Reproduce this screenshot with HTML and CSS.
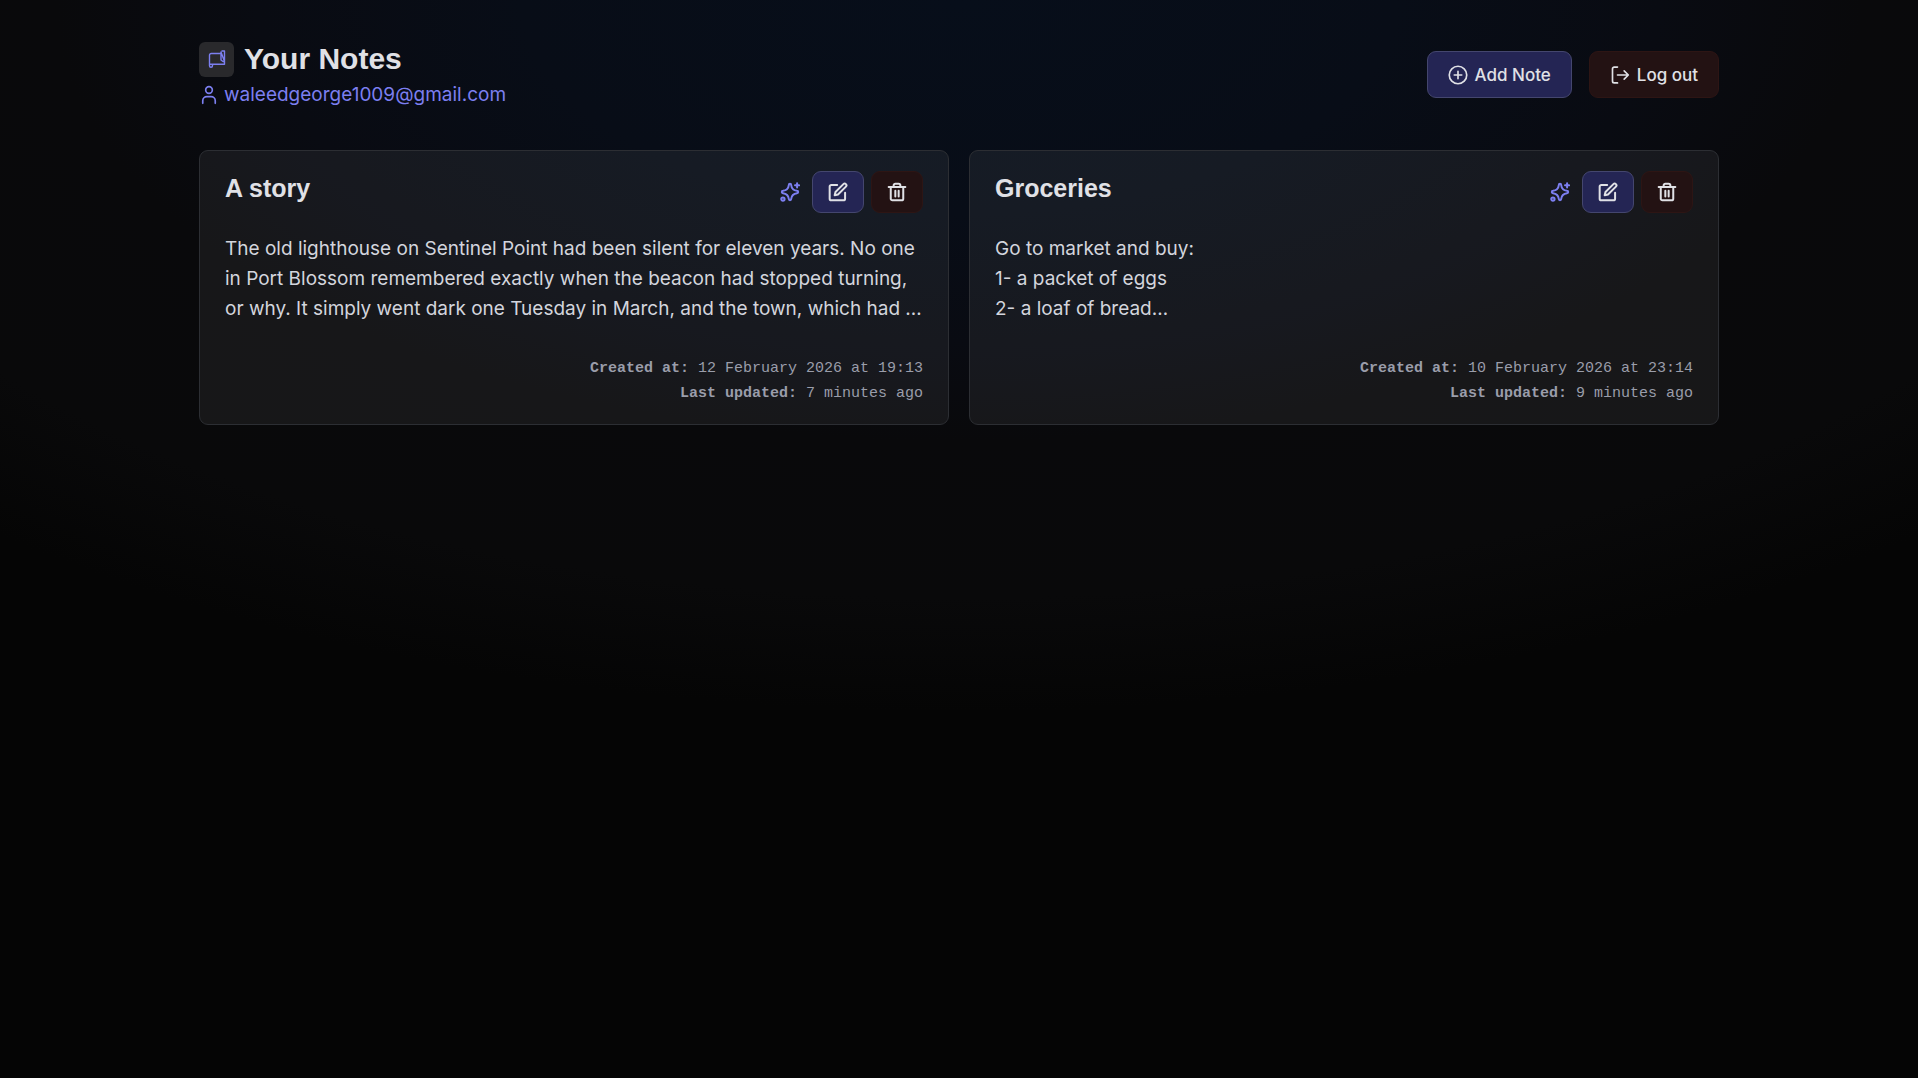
FILE: index.html
```html
<!DOCTYPE html>
<html lang="en">
<head>
  <meta charset="UTF-8">
  <title>Your Notes</title>
  <meta name="viewport" content="width=device-width, initial-scale=1.0">
  <link rel="stylesheet" href="styles.css">
</head>
<body>
  <!-- shared icons -->
  <svg class="sprite" aria-hidden="true">
    <symbol id="icon-sparkles" viewBox="0 0 24 24">
      <path d="M10.600 3.600a1.400 1.400 0 0 1 2.800 0c.5 4.600 2.400 6.500 7 7a1.400 1.400 0 0 1 0 2.800c-4.600.5-6.500 2.400-7 7a1.400 1.400 0 0 1-2.800 0c-.5-4.600-2.400-6.500-7-7a1.400 1.400 0 0 1 0-2.800c4.600-.5 6.500-2.400 7-7z"/>
      <path d="M20.500 1.500v5M23 4h-5"/>
      <circle cx="3.500" cy="20.500" r="2"/>
    </symbol>
    <symbol id="icon-edit" viewBox="0 0 24 24">
      <path d="M11 3.500H4a2 2 0 0 0-2 2v14.500a2 2 0 0 0 2 2h14.500a2 2 0 0 0 2-2v-7"/>
      <path d="M18.500 2.500a2.120 2.120 0 0 1 3 3L12 15l-4 1 1-4z"/>
    </symbol>
    <symbol id="icon-trash" viewBox="0 0 24 24">
      <path d="M2 6h20M8 6V4a2 2 0 0 1 2-2h4a2 2 0 0 1 2 2v2M19.500 6v14a2 2 0 0 1-2 2h-11a2 2 0 0 1-2-2V6M10 10.500v7M14 10.500v7"/>
    </symbol>
  </svg>

  <div class="page">
    <header class="header">
      <div>
        <h1 class="title">
          <span class="logo">
            <svg viewBox="0 0 20 20"><path d="M14 4.500H4.200a1.700 1.700 0 0 0-1.700 1.700V16.800a1.500 1.500 0 0 0 3 0V15.200H14.500M2.500 15.200H5.500M14.500 2H17.500V15.200H14.500M17.500 12.500H16L14 11V3Z"/></svg>
          </span>
          Your Notes
        </h1>
        <p class="email">
          <svg class="icon" viewBox="0 0 24 24"><circle cx="12" cy="6" r="4"/><path d="M4.500 22v-3a5 5 0 0 1 5-5h5a5 5 0 0 1 5 5v3"/></svg>
          waleedgeorge1009@gmail.com
        </p>
      </div>
      <div class="header-actions">
        <button class="btn btn-primary" type="button">
          <svg class="icon" viewBox="0 0 24 24"><circle cx="12" cy="12" r="10.500"/><path d="M12 7.500v9M7.500 12h9"/></svg>
          Add Note
        </button>
        <button class="btn btn-danger" type="button">
          <svg class="icon" viewBox="0 0 24 24"><path d="M9 2.500H5a2 2 0 0 0-2 2v15a2 2 0 0 0 2 2h4M9 12h13M17 7l5 5-5 5"/></svg>
          Log out
        </button>
      </div>
    </header>

    <main class="notes">
      <article class="note">
        <div class="note-head">
          <h2>A story</h2>
          <div class="note-actions">
            <button class="btn-ai" type="button" aria-label="Summarize"><svg class="icon"><use href="#icon-sparkles"/></svg></button>
            <button class="btn btn-small btn-primary" type="button" aria-label="Edit"><svg class="icon"><use href="#icon-edit"/></svg></button>
            <button class="btn btn-small btn-danger" type="button" aria-label="Delete"><svg class="icon"><use href="#icon-trash"/></svg></button>
          </div>
        </div>
        <p class="note-text">The old lighthouse on Sentinel Point had been silent for eleven years. No one
in Port Blossom remembered exactly when the beacon had stopped turning,
or why. It simply went dark one Tuesday in March, and the town, which had …</p>
        <div class="note-meta">
          <p><strong>Created at:</strong> 12 February 2026 at 19:13</p>
          <p><strong>Last updated:</strong> 7 minutes ago</p>
        </div>
      </article>

      <article class="note">
        <div class="note-head">
          <h2>Groceries</h2>
          <div class="note-actions">
            <button class="btn-ai" type="button" aria-label="Summarize"><svg class="icon"><use href="#icon-sparkles"/></svg></button>
            <button class="btn btn-small btn-primary" type="button" aria-label="Edit"><svg class="icon"><use href="#icon-edit"/></svg></button>
            <button class="btn btn-small btn-danger" type="button" aria-label="Delete"><svg class="icon"><use href="#icon-trash"/></svg></button>
          </div>
        </div>
        <p class="note-text">Go to market and buy:
1- a packet of eggs
2- a loaf of bread…</p>
        <div class="note-meta">
          <p><strong>Created at:</strong> 10 February 2026 at 23:14</p>
          <p><strong>Last updated:</strong> 9 minutes ago</p>
        </div>
      </article>
    </main>
  </div>
</body>
</html>
```

FILE: styles.css
```css
* {
  box-sizing: border-box;
  margin: 0;
  padding: 0;
}
body {
  min-height: 100vh;
  background: radial-gradient(ellipse 76% 66% at 50% 0, #070e1a 0%, #080d17 30%, #090b12 48%, #09090b 62%, #09090a 84%, #050505 100%) no-repeat #050505;
  color: #e0e1e6;
  font-family: Inter, sans-serif;
  font-size: 19px;
}
.sprite {
  display: none;
}
.page {
  max-width: 1600px;
  margin: 0 auto;
  padding: 39px 40px;
}
.icon {
  width: 20px;
  height: 20px;
  flex: none;
  fill: none;
  stroke: currentColor;
  stroke-width: 2;
  stroke-linecap: round;
  stroke-linejoin: round;
}

/* header */
.header {
  display: flex;
  justify-content: space-between;
  align-items: center;
  margin-bottom: 40px;
}
.title {
  display: flex;
  align-items: center;
  gap: 10px;
  font-family: "Liberation Sans", sans-serif;
  font-size: 30px;
  line-height: 40px;
}
.logo {
  display: flex;
  align-items: center;
  justify-content: center;
  width: 35px;
  height: 35px;
  border-radius: 6px;
  background: #29292c;
}
.logo svg {
  width: 20px;
  height: 20px;
  fill: none;
  stroke: #7c7ff0;
  stroke-width: 1.4;
  stroke-linejoin: round;
}
.email {
  display: flex;
  align-items: center;
  gap: 5px;
  color: #7c7ff0;
  line-height: 31px;
}
.header-actions {
  display: flex;
  gap: 17px;
}

/* buttons */
.btn {
  display: flex;
  align-items: center;
  gap: 7px;
  height: 47px;
  padding: 0 20px;
  border: 1px solid transparent;
  border-radius: 9px;
  color: #e0e1e6;
  font-family: inherit;
  font-size: 17px;
  font-weight: 500;
  cursor: pointer;
}
.btn-small {
  height: 42px;
  padding: 0 15px;
}
.btn-primary {
  background: #242554;
  border-color: #44466e;
}
.btn-danger {
  background: #231213;
  border-color: #2d1514;
}
.btn-ai {
  display: flex;
  padding: 0 5px;
  border: none;
  background: none;
  color: #7c7ff0;
  cursor: pointer;
}
.note-actions .icon {
  stroke-width: 2.4;
}

/* notes */
.notes {
  display: grid;
  grid-template-columns: repeat(auto-fill, minmax(min(100%, 600px), 1fr));
  gap: 20px;
}
.note {
  padding: 20px 25px 18px;
  border: 1px solid #2c2e33;
  border-radius: 9px;
  background: rgba(255, 255, 255, 0.06);
}
.note-head {
  display: flex;
  justify-content: space-between;
  align-items: flex-start;
  margin-bottom: 21px;
}
.note-head h2 {
  font-family: "Liberation Sans", sans-serif;
  font-size: 25px;
  line-height: 34px;
}
.note-actions {
  display: flex;
  align-items: center;
  gap: 7px;
}
.note-text {
  margin-bottom: 32px;
  line-height: 30px;
  color: #d3d5dd;
  white-space: pre-line;
}
.note-meta {
  font-family: "Liberation Mono", monospace;
  font-size: 15px;
  line-height: 25px;
  text-align: right;
  color: #9a9daa;
}
```
